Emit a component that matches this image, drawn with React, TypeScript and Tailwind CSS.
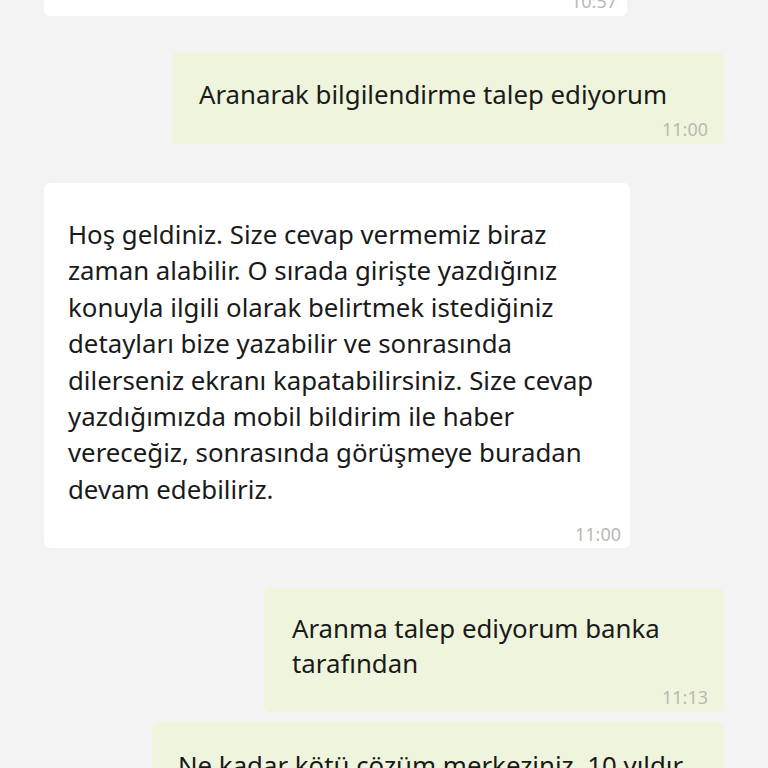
import React from 'react';

type Msg = {
  side: 'in' | 'out';
  lines: string[];
  time: string;
  width: string;
  pad: string;
  leading: string;
  timeGap: string;
  gap: string;
};

const messages: Msg[] = [
  {
    side: 'out',
    lines: ['Aranarak bilgilendirme talep ediyorum'],
    time: '11:00',
    width: 'w-[552px]',
    pad: 'pt-6 pl-[27px] pr-4 pb-1',
    leading: 'leading-[36px]',
    timeGap: 'mt-[6px]',
    gap: 'mt-9',
  },
  {
    side: 'in',
    lines: [
      'Hoş geldiniz. Size cevap vermemiz biraz',
      'zaman alabilir. O sırada girişte yazdığınız',
      'konuyla ilgili olarak belirtmek istediğiniz',
      'detayları bize yazabilir ve sonrasında',
      'dilerseniz ekranı kapatabilirsiniz. Size cevap',
      'yazdığımızda mobil bildirim ile haber',
      'vereceğiz, sonrasında görüşmeye buradan',
      'devam edebiliriz.',
    ],
    time: '11:00',
    width: 'w-[586px]',
    pad: 'pt-[33px] pl-6 pr-[9px] pb-[3px]',
    leading: 'leading-[36.4px]',
    timeGap: 'mt-4',
    gap: 'mt-[39px]',
  },
  {
    side: 'out',
    lines: ['Aranma talep ediyorum banka', 'tarafından'],
    time: '11:13',
    width: 'w-[460px]',
    pad: 'pt-[23px] pl-7 pr-4 pb-1',
    leading: 'leading-[35px]',
    timeGap: 'mt-[5px]',
    gap: 'mt-10',
  },
  {
    side: 'out',
    lines: ['Ne kadar kötü çözüm merkeziniz. 10 yıldır', 'müşterinizim, bir kere bile aranmadım'],
    time: '11:14',
    width: 'w-[572px]',
    pad: 'pt-[25px] pl-[26px] pr-4 pb-1',
    leading: 'leading-[36px]',
    timeGap: 'mt-2',
    gap: 'mt-[10px]',
  },
];

function Bubble({ msg }: { msg: Msg }) {
  const color = msg.side === 'out' ? 'bg-[#eef5dc] self-end' : 'bg-white self-start';
  return (
    <div className={`${msg.gap} ${msg.width} ${color} ${msg.pad} rounded-md`}>
      <div className={`text-[25.8px] ${msg.leading} text-[#1a1a1a]`}>
        {msg.lines.map((line, i) => (
          <div key={i} className="whitespace-nowrap">{line}</div>
        ))}
      </div>
      <div className={`${msg.timeGap} flex justify-end text-[18px] leading-[22px] text-[#b9b9b3]`}>
        {msg.time}
      </div>
    </div>
  );
}

export default function App() {
  return (
    <div className="h-[768px] overflow-hidden bg-[#f4f3f4] px-11 font-['Noto_Sans',sans-serif]">
      <div className="flex flex-col">
        <div className="-mt-[10px] w-[583px] self-start rounded-md bg-white pr-[10px] pb-1">
          <div className="flex justify-end text-[18px] leading-[22px] text-[#b9b9b3]">10:57</div>
        </div>
        {messages.map((m, i) => (
          <Bubble key={i} msg={m} />
        ))}
      </div>
    </div>
  );
}
